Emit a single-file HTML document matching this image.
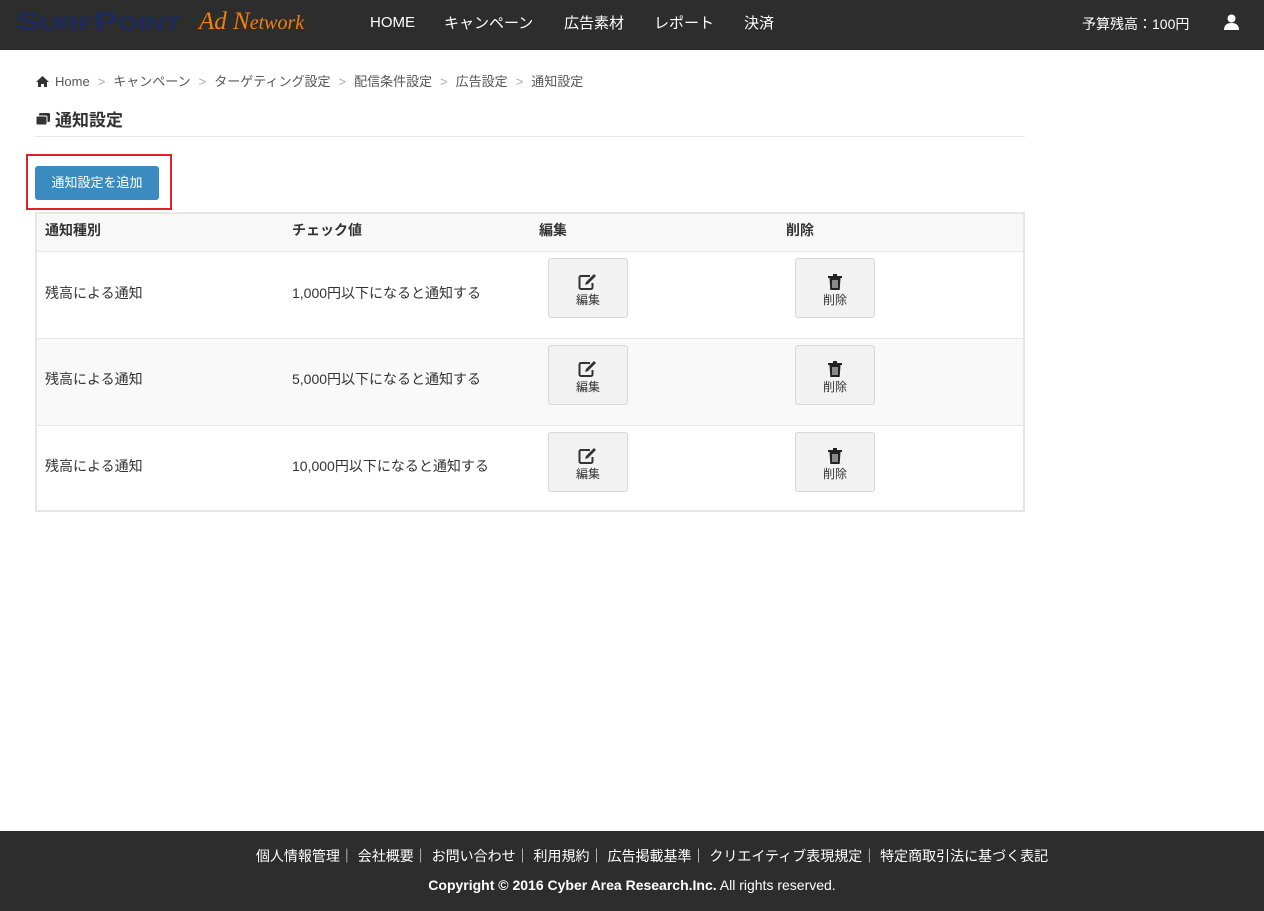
<!DOCTYPE html>
<html><head><meta charset="utf-8"><style>
*{box-sizing:border-box;margin:0;padding:0}
body{width:1264px;height:911px;position:relative;font-family:"Liberation Sans","Noto Sans CJK JP",sans-serif;background:#fff;color:#333;font-size:14px}
.hd{position:absolute;left:0;top:0;width:1264px;height:50px;background:#2d2d2d;color:#fff}
.logo{position:absolute;left:16px;top:0;height:50px;white-space:nowrap}
.sp{position:absolute;left:0;top:8px;font-family:"Liberation Sans",sans-serif;font-weight:bold;color:#1d2a5c;display:inline-block;transform:scaleX(1.45);transform-origin:left;letter-spacing:-0.5px}
.sp .b{font-size:25px}.sp .s{font-size:19px}
.ad{position:absolute;left:183px;top:8px;font-family:"Liberation Serif",serif;font-style:italic;color:#f08010;font-size:25px}
.nav{position:absolute;top:14px;font-size:15px}
.ft{position:absolute;left:0;top:831px;width:1264px;height:80px;background:#2d2d2d;color:#fff;text-align:center;font-size:14px}
.bc{position:absolute;left:36px;top:71px;font-size:13px;color:#555}
.bc span.s{color:#aaa;margin:0 8px}
h2{position:absolute;left:36px;top:106px;font-size:17px;font-weight:bold;color:#333}
.hr{position:absolute;left:35px;top:136px;width:990px;border-top:1px solid #e8e8e8}
.red{position:absolute;left:26px;top:154px;width:146px;height:56px;border:2px solid #e0202a}
.add{position:absolute;left:35px;top:166px;width:124px;height:34px;background:#3a8cc0;color:#fff;border-radius:3px;font-size:13px;text-align:center;line-height:34px}
.tb{position:absolute;left:35px;top:212px;width:990px;height:300px;border:2px solid #e6e6e6}
.row{position:absolute;left:0;width:986px}
.c{position:absolute;font-size:14px}
.btn{position:absolute;width:80px;height:60px;background:#f2f2f2;border:1px solid #d8d8d8;border-radius:3px;text-align:center;font-size:12px}
.btn svg{display:block;margin:15px auto 1px}
</style></head><body>
<div class="hd">
<div class="logo"><span class="sp"><span class="b">S</span><span class="s">URF</span><span class="b">P</span><span class="s">OINT</span></span><span class="ad">Ad N<span style="font-size:20px">etwork</span></span></div>
<span class="nav" style="left:370px">HOME</span>
<span class="nav" style="left:444px;top:12px">キャンペーン</span>
<span class="nav" style="left:564px;top:12px">広告素材</span>
<span class="nav" style="left:654px;top:12px">レポート</span>
<span class="nav" style="left:744px;top:12px">決済</span>
<span class="nav" style="left:1082px;top:14px;font-size:14px">予算残高：100円</span>
<svg style="position:absolute;left:1224px;top:14px" width="15" height="16" viewBox="0 0 15 16"><circle cx="7.5" cy="4.5" r="4" fill="#fff"/><path d="M0 16c0-5 3-7 7.5-7s7.5 2 7.5 7z" fill="#fff"/></svg>
</div>
<div class="bc"><svg width="13" height="11" viewBox="0 0 13 11" style="vertical-align:-1px;margin-right:6px"><path d="M6.5 0L0 6h2v5h3V8h3v3h3V6h2z" fill="#333"/></svg>Home<span class="s">&gt;</span>キャンペーン<span class="s">&gt;</span>ターゲティング設定<span class="s">&gt;</span>配信条件設定<span class="s">&gt;</span>広告設定<span class="s">&gt;</span>通知設定</div>
<h2><svg width="14" height="13" viewBox="0 0 14 13" style="margin-right:5px"><rect x="3" y="0" width="11" height="9" rx="1.5" fill="#333"/><rect x="0" y="3" width="11" height="9" rx="1.5" fill="#333" stroke="#fff" stroke-width="1"/></svg>通知設定</h2>
<div class="hr"></div>
<div class="red"></div>
<div class="add">通知設定を追加</div>
<div class="tb">
<div class="row" style="top:0;height:37px;background:#f8f8f8;font-weight:bold">
<span class="c" style="left:8px;top:6px">通知種別</span><span class="c" style="left:255px;top:6px">チェック値</span><span class="c" style="left:502px;top:6px">編集</span><span class="c" style="left:749px;top:6px">削除</span></div>
<div class="row" style="top:37px;height:87px;border-top:1px solid #e6e6e6">
<span class="c" style="left:8px;top:31px">残高による通知</span><span class="c" style="left:255px;top:31px">1,000円以下になると通知する</span></div>
<div class="row" style="top:124px;height:87px;border-top:1px solid #e6e6e6;background:#f9f9f9">
<span class="c" style="left:8px;top:30px">残高による通知</span><span class="c" style="left:255px;top:30px">5,000円以下になると通知する</span></div>
<div class="row" style="top:211px;height:87px;border-top:1px solid #e6e6e6">
<span class="c" style="left:8px;top:30px">残高による通知</span><span class="c" style="left:255px;top:30px">10,000円以下になると通知する</span></div>
</div>
<div class="btn" style="left:548px;top:258px"><svg width="20" height="16" viewBox="0 0 20 16"><path d="M12 2H3a1.5 1.5 0 0 0-1.5 1.5v10A1.5 1.5 0 0 0 3 15h10a1.5 1.5 0 0 0 1.5-1.5V9" fill="none" stroke="#333" stroke-width="2"/><path d="M7 11l1-3 8-8 2 2-8 8z" fill="#333"/></svg>編集</div>
<div class="btn" style="left:795px;top:258px"><svg width="14" height="16" viewBox="0 0 14 16"><path d="M0 2h14v2H0zM5 0h4v2H5zM1.5 4h11l-.8 12H2.3z" fill="#222"/><path d="M5 6v8M7 6v8M9 6v8" stroke="#f2f2f2" stroke-width="1"/></svg>削除</div>
<div class="btn" style="left:548px;top:345px"><svg width="20" height="16" viewBox="0 0 20 16"><path d="M12 2H3a1.5 1.5 0 0 0-1.5 1.5v10A1.5 1.5 0 0 0 3 15h10a1.5 1.5 0 0 0 1.5-1.5V9" fill="none" stroke="#333" stroke-width="2"/><path d="M7 11l1-3 8-8 2 2-8 8z" fill="#333"/></svg>編集</div>
<div class="btn" style="left:795px;top:345px"><svg width="14" height="16" viewBox="0 0 14 16"><path d="M0 2h14v2H0zM5 0h4v2H5zM1.5 4h11l-.8 12H2.3z" fill="#222"/><path d="M5 6v8M7 6v8M9 6v8" stroke="#f2f2f2" stroke-width="1"/></svg>削除</div>
<div class="btn" style="left:548px;top:432px"><svg width="20" height="16" viewBox="0 0 20 16"><path d="M12 2H3a1.5 1.5 0 0 0-1.5 1.5v10A1.5 1.5 0 0 0 3 15h10a1.5 1.5 0 0 0 1.5-1.5V9" fill="none" stroke="#333" stroke-width="2"/><path d="M7 11l1-3 8-8 2 2-8 8z" fill="#333"/></svg>編集</div>
<div class="btn" style="left:795px;top:432px"><svg width="14" height="16" viewBox="0 0 14 16"><path d="M0 2h14v2H0zM5 0h4v2H5zM1.5 4h11l-.8 12H2.3z" fill="#222"/><path d="M5 6v8M7 6v8M9 6v8" stroke="#f2f2f2" stroke-width="1"/></svg>削除</div>
<div class="ft">
<div style="position:absolute;top:15px;width:100%;padding-left:40px">個人情報管理｜ 会社概要｜ お問い合わせ｜ 利用規約｜ 広告掲載基準｜ クリエイティブ表現規定｜ 特定商取引法に基づく表記</div>
<div style="position:absolute;top:46px;width:100%"><b>Copyright © 2016 Cyber Area Research.Inc.</b> All rights reserved.</div>
</div>
</body></html>
